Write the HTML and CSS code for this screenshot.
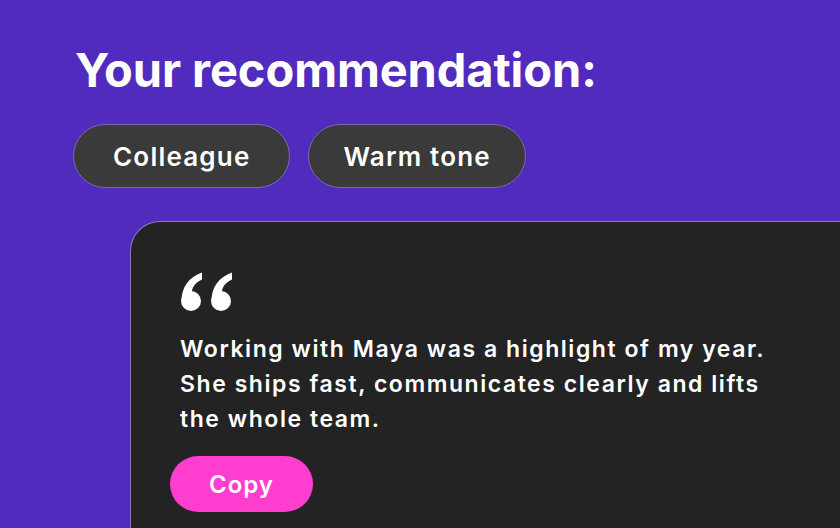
FILE: index.html
```html
<!DOCTYPE html>
<html lang="en">
<head>
  <meta charset="UTF-8" />
  <meta name="viewport" content="width=device-width, initial-scale=1.0" />
  <title>Your recommendation</title>
  <link rel="stylesheet" href="styles.css">
</head>
<body>

  <!-- Header -->
  <div class="intro">
    <h1>Your recommendation:</h1>
    <div class="chips">
      <span class="chip">Colleague</span>
      <span class="chip chip-tone">Warm tone</span>
    </div>
  </div>

  <!-- Recommendation Card -->
  <div class="card">
    <svg class="quote" width="54" height="40" viewBox="0 0 54 40">
      <circle cx="11" cy="29" r="10" fill="#fff" />
      <path d="M1.5 29 C1.5 15 9 5 22 0.5 L22 7.5 C15.5 10.5 12 15 12 20 Z" fill="#fff" />
      <circle cx="41" cy="29" r="10" fill="#fff" />
      <path d="M31.5 29 C31.5 15 39 5 52 0.5 L52 7.5 C45.5 10.5 42 15 42 20 Z" fill="#fff" />
    </svg>
    <p class="quote-text">Working with Maya was a highlight of my year.<br>She ships fast, communicates clearly and lifts<br>the whole team.</p>
    <button class="copy-btn">Copy</button>
  </div>

</body>
</html>
```

FILE: styles.css
```css
/* Reset & Base */
* {
  margin: 0;
  padding: 0;
  box-sizing: border-box;
}
html, body {
  height: 100%;
  font-family: 'Inter', 'Liberation Sans', sans-serif;
  background: #512bbd;
  color: #fff;
  overflow: hidden;
}

/* Header */
.intro {
  padding: 42px 0 0 73px;
}
.intro h1 {
  font-size: 47px;
  font-weight: 700;
  line-height: 56px;
  letter-spacing: -0.1px;
  padding-left: 2px;
}
.chips {
  display: flex;
  gap: 18px;
  margin-top: 26px;
}
.chip {
  display: flex;
  align-items: center;
  justify-content: center;
  height: 64px;
  padding: 0 38px 0 39px;
  background: #3a3a3a;
  border: 1px solid #7a6aa8;
  border-radius: 32px;
  font-size: 26px;
  font-weight: 600;
  letter-spacing: 1.2px;
}
.chip-tone {
  padding: 0 34px 0 35px;
}

/* Card */
.card {
  margin: 33px 0 0 130px;
  height: 400px;
  background: #232323;
  border-top: 1px solid #8a7bb8;
  border-left: 1px solid #8a7bb8;
  border-radius: 30px 0 0 0;
  padding: 50px 0 0 49px;
}
.quote {
  display: block;
  margin-bottom: 20px;
}
.quote-text {
  font-size: 23px;
  font-weight: 600;
  line-height: 35px;
  letter-spacing: 1.55px;
}

/* Copy Button */
.copy-btn {
  margin: 19px 0 0 -10px;
  width: 143px;
  height: 56px;
  background: #ff3dcf;
  border: none;
  border-radius: 28px;
  color: #fff;
  font-family: inherit;
  font-size: 24px;
  font-weight: 600;
  letter-spacing: 1px;
  cursor: pointer;
}
```
